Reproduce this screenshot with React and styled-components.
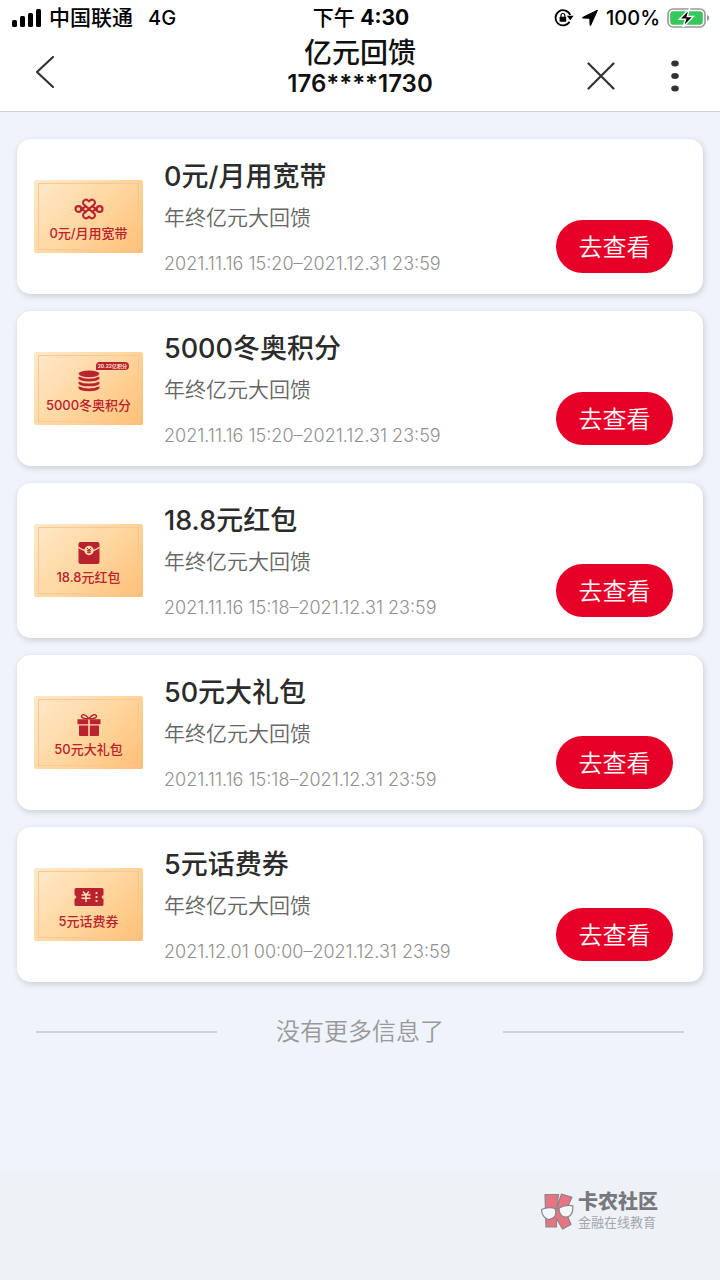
import styled, { createGlobalStyle } from "styled-components";

const GlobalStyle = createGlobalStyle`
    * {
        box-sizing: border-box;
    }
    body {
        margin: 0;
        background: #eff3fb;
        color: #333;
        font-family: Inter, "Noto Sans CJK SC", sans-serif;
    }
`

const Page = styled.div`
    min-height: 100vh;
    display: flex;
    flex-direction: column;
`

const Header = styled.header`
    background: #fff;
    border-bottom: 1px solid #cfd1d6;
`

const StatusBar = styled.div`
    display: grid;
    grid-template-columns: 1fr auto 1fr;
    align-items: center;
    height: 36px;
    padding: 0 10px 0 12px;
    color: #000;
    font-size: 20px;
    font-weight: 500;
    line-height: 36px;
`

const StatusGroup = styled.div`
    display: flex;
    align-items: center;
    justify-content: ${(props) => (props.$end ? "flex-end" : "flex-start")};
    gap: 7px;
`

const Carrier = styled.span`
    font-size: 21px;
    margin-right: 8px;
`

const Clock = styled.span`
    font-size: 21px;
    b {
        font-weight: 700;
    }
`

const NavBar = styled.nav`
    display: grid;
    grid-template-columns: 1fr auto 1fr;
    align-items: center;
    height: 75px;
    padding: 0 28px 12px;
`

const NavGroup = styled.div`
    display: flex;
    justify-content: ${(props) => (props.$end ? "flex-end" : "flex-start")};
    gap: 40px;
    padding-top: ${(props) => (props.$end ? "16px" : "8px")};
`

const IconButton = styled.button`
    display: flex;
    align-items: center;
    justify-content: center;
    width: 34px;
    height: 34px;
    padding: 0;
    border: none;
    background: none;
`

const NavTitle = styled.h1`
    margin: 0;
    color: #111;
    font-size: 28px;
    font-weight: 500;
    line-height: 32px;
    text-align: center;
    span {
        display: block;
        font-size: 24px;
        font-weight: 600;
        line-height: 30px;
    }
`

const CardList = styled.main`
    display: flex;
    flex-direction: column;
    gap: 17px;
    padding: 27px 17px 0;
`

const Card = styled.article`
    display: flex;
    align-items: center;
    gap: 21px;
    height: 155px;
    padding: 0 30px 0 17px;
    border-radius: 14px;
    background: #fff;
    box-shadow: 1px 2px 6px rgba(0, 0, 0, 0.16);
`

const Thumb = styled.div`
    flex: none;
    width: 109px;
    height: 73px;
    padding: 3px 4px;
    border-radius: 2px;
    background: linear-gradient(135deg, #ffe9cb 0%, #ffd7a0 50%, #ffbf74 100%);
`

const ThumbInner = styled.div`
    position: relative;
    display: flex;
    flex-direction: column;
    align-items: center;
    height: 100%;
    padding-top: 14px;
    border: 1px solid #f8c795;
    color: #b9222f;
    font-size: 13px;
    font-weight: 500;
    line-height: 18px;
    white-space: nowrap;
    svg {
        display: block;
        margin-bottom: 4px;
    }
`

const Badge = styled.span`
    position: absolute;
    top: 6px;
    right: 9px;
    padding: 0 2px;
    border-radius: 4px 4px 4px 0;
    background: #b9222f;
    color: #ffe9cb;
    font-size: 5px;
    font-weight: 700;
    line-height: 8px;
`

const Info = styled.div`
    flex: 1;
    align-self: flex-start;
    padding-top: 18px;
`

const Title = styled.h2`
    margin: 0;
    color: #2b2b2b;
    font-size: 27px;
    font-weight: 500;
    line-height: 40px;
`

const Subtitle = styled.p`
    margin: 6px 0 0;
    color: #666;
    font-size: 21px;
    font-weight: 350;
    line-height: 30px;
`

const Period = styled.p`
    margin: 19px 0 0;
    color: #909090;
    font-size: 18px;
    font-weight: 300;
    line-height: 24px;
`

const ViewButton = styled.button`
    flex: none;
    align-self: flex-end;
    width: 117px;
    height: 53px;
    margin-bottom: 21px;
    padding: 0 0 2px;
    border: none;
    border-radius: 27px;
    background: #e60027;
    color: #fff;
    font-family: inherit;
    font-size: 24px;
    font-weight: 350;
`

const EndNote = styled.div`
    display: flex;
    align-items: center;
    gap: 59px;
    padding: 32px 36px 0;
    color: #999;
    font-size: 24px;
    font-weight: 350;
    line-height: 36px;
    &::before,
    &::after {
        content: "";
        flex: 1;
        height: 2px;
        background: #d0d2d8;
    }
`

const Footer = styled.footer`
    display: flex;
    align-items: center;
    justify-content: flex-end;
    gap: 4px;
    margin-top: auto;
    padding: 21px 62px 49px 0;
    background: #eef2f7;
    color: #77797e;
`

const BrandName = styled.div`
    font-size: 20px;
    font-weight: 900;
    line-height: 22px;
    small {
        display: block;
        color: #a4a6ab;
        font-size: 13px;
        font-weight: 400;
        line-height: 18px;
    }
`

const SignalIcon = () => (
    <svg width="30" height="20" viewBox="0 0 30 20" fill="#000">
        <rect x="0" y="12" width="5" height="7" rx="1.5" />
        <rect x="8" y="8" width="5" height="11" rx="1.5" />
        <rect x="16" y="5" width="5" height="14" rx="1.5" />
        <rect x="24" y="1" width="5" height="18" rx="1.5" />
    </svg>
)

const RotationLockIcon = () => (
    <svg width="20" height="18" viewBox="0 0 20 18">
        <path d="M16.2 6A7.6 7.6 0 1 0 15.6 12.8" fill="none" stroke="#000" strokeWidth="1.8" />
        <path d="M12.8 6.8h6.8l-3.3 4.4z" fill="#000" />
        <rect x="5.6" y="7.8" width="6.6" height="5" rx="0.6" fill="#000" />
        <path d="M7 8.3V6.4a1.9 1.9 0 0 1 3.8 0v1.9" fill="none" stroke="#000" strokeWidth="1.2" />
    </svg>
)

const LocationIcon = () => (
    <svg width="18" height="18" viewBox="0 0 18 18">
        <path d="M16.5 1.2 9.7 16.2q-.4.8-.6 0L8.8 9.3 1.9 9q-1-.2 0-.7z" fill="#000" stroke="#000" strokeLinejoin="round" />
    </svg>
)

const BatteryIcon = () => (
    <svg width="43" height="20" viewBox="0 0 43 20">
        <rect x="1" y="1" width="37" height="18" rx="5" fill="none" stroke="#96999c" strokeWidth="1.6" />
        <rect x="3.2" y="3.2" width="32.6" height="13.6" rx="3" fill="#35c759" />
        <path d="M40 7q2.3 1 2.3 3T40 13z" fill="#96999c" />
        <path d="M22.4 1 12.3 11.2h6.3L16 19l10.5-10.5h-6.2z" fill="#000" stroke="#fff" strokeWidth="1.4" />
    </svg>
)

const BackIcon = () => (
    <svg width="20" height="34" viewBox="0 0 20 34" fill="none" stroke="#333" strokeWidth="2.2" strokeLinecap="round" strokeLinejoin="round">
        <path d="M18 2 2 17l16 15" />
    </svg>
)

const CloseIcon = () => (
    <svg width="28" height="28" viewBox="0 0 28 28" stroke="#333" strokeWidth="2.2" strokeLinecap="round">
        <path d="M1.5 1.5l25 25M26.5 1.5l-25 25" />
    </svg>
)

const MoreIcon = () => (
    <svg width="8" height="32" viewBox="0 0 8 32" fill="#333">
        <ellipse cx="4" cy="3.5" rx="3.8" ry="3" />
        <ellipse cx="4" cy="16" rx="3.8" ry="3" />
        <ellipse cx="4" cy="28.5" rx="3.8" ry="3" />
    </svg>
)

const KnotIcon = () => (
    <svg width="30" height="22" viewBox="0 0 30 22" fill="none" stroke="#b9222f" strokeWidth="2.1">
        <path d="M15 11 9.6 6.4A3 3 0 1 1 15 4.2 3 3 0 1 1 20.4 6.4L9.600 15.600A3 3 0 1 0 15 17.800 3 3 0 1 0 20.400 15.600z" />
        <circle cx="4.4" cy="11" r="2.9" />
        <circle cx="25.6" cy="11" r="2.9" />
        <path d="M6.8 9.4l4.6 4.4M6.8 12.6l4.6-4.4M23.2 9.4l-4.6 4.4M23.2 12.6l-4.6-4.4" />
    </svg>
)

const CoinsIcon = () => (
    <svg width="22" height="22" viewBox="0 0 22 22" fill="#b9222f">
        <ellipse cx="11" cy="3.8" rx="10.4" ry="3.4" />
        <path d="M.6 6.5q10.4 4.4 20.8 0v2.3q-2 2.6-10.4 2.6T.6 8.8z" />
        <path d="M.6 11.4q10.4 4.4 20.8 0v2.3q-2 2.6-10.4 2.6T.6 13.7z" />
        <path d="M.6 16.3q10.4 4.4 20.8 0v2.3q-2 2.6-10.4 2.6T.6 18.6z" />
    </svg>
)

const EnvelopeIcon = () => (
    <svg width="22" height="22" viewBox="0 0 22 22">
        <rect x=".5" y="0" width="21" height="22" rx="2" fill="#b9222f" />
        <path d="M.5 5.2q4 3.4 10.5 3.6 6.5-.2 10.5-3.6" fill="none" stroke="#ffdcae" strokeWidth="1.5" />
        <circle cx="11" cy="8.5" r="4.7" fill="#ffdcae" />
        <path d="m9 5.8 2 2.6 2-2.6M11 8.4v3.2M9 8.6h4M9 10.2h4" fill="none" stroke="#b9222f" strokeWidth="1" />
    </svg>
)

const GiftIcon = () => (
    <svg width="24" height="22" viewBox="0 0 24 22">
        <path d="M12 4.7C9 .2 5-.2 4.5 2.2 4.5 4.2 8 4.7 12 4.7 15-.2 19-.2 19.5 2.2 19.5 4.2 16 4.7 12 4.7" fill="none" stroke="#b9222f" strokeWidth="1.4" />
        <path d="M.5 5.2h10.7v5H.5zM12.8 5.2h10.7v5H12.8zM2 11.5h9.2V22H3q-1 0-1-1zM12.8 11.5H22V21q0 1-1 1h-8.2z" fill="#b9222f" />
    </svg>
)

const CouponIcon = () => (
    <svg width="30" height="22" viewBox="0 0 30 22">
        <path d="M2 2h26q1.5 0 1.5 1.5v5.700a1.8 1.8 0 0 0 0 3.6V18.5q0 1.5-1.5 1.5H2Q.5 20 .5 18.5v-5.700a1.8 1.8 0 0 0 0-3.6V3.5Q.5 2 2 2z" fill="#b9222f" />
        <path d="m9 5.5 3 3.5 3-3.5M7.5 9h9M7.5 12.3h9M12 9v7" fill="none" stroke="#ffe0b8" strokeWidth="1.5" />
        <path d="M22.5 6v11" stroke="#ffe0b8" strokeWidth="1.8" strokeDasharray="2 2" />
    </svg>
)

const BrandLogo = () => (
    <svg width="34" height="37" viewBox="0 0 34 37" stroke="#85878b" strokeWidth="1.2" strokeLinejoin="round">
        <path d="M5 1.5h13.5L17 14.5 21.5 1l10.5 3.2L25.5 18 31 31.5 22.5 36l-6-10.5v8.5H6z" fill="#e87481" />
        <path d="M1.5 16.5Q8 13.5 15 15.5q2 5-.8 8.5-3 3.5-7.5 1.8Q2 23.5 1.5 16.5zM19 15q7-3.5 13.8-2.2 .4 7-2.6 9.7-3.5 3-8 .5Q19 20.5 19 15z" fill="#f4f6fa" />
        <path d="M15.3 16.5q2-1.8 3.8-.8" fill="none" strokeWidth="1.6" />
    </svg>
)

const offers = [
    { title: "0元/月用宽带", period: "2021.11.16 15:20–2021.12.31 23:59", icon: <KnotIcon /> },
    { title: "5000冬奥积分", period: "2021.11.16 15:20–2021.12.31 23:59", icon: <CoinsIcon />, badge: "20.22亿积分" },
    { title: "18.8元红包", period: "2021.11.16 15:18–2021.12.31 23:59", icon: <EnvelopeIcon /> },
    { title: "50元大礼包", period: "2021.11.16 15:18–2021.12.31 23:59", icon: <GiftIcon /> },
    { title: "5元话费券", period: "2021.12.01 00:00–2021.12.31 23:59", icon: <CouponIcon /> },
]

const OfferCard = (props) => {
    const { title, period, icon, badge } = props.data;

    return (
        <Card>
            <Thumb>
                <ThumbInner>
                    {icon}
                    {!!badge && <Badge>{badge}</Badge>}
                    <span>{title}</span>
                </ThumbInner>
            </Thumb>
            <Info>
                <Title>{title}</Title>
                <Subtitle>年终亿元大回馈</Subtitle>
                <Period>{period}</Period>
            </Info>
            <ViewButton type="button">去查看</ViewButton>
        </Card>
    )
}

const App = () => {
    return (
        <Page lang="zh-CN">
            <GlobalStyle />
            <Header>
                <StatusBar>
                    <StatusGroup>
                        <SignalIcon />
                        <Carrier>中国联通</Carrier>
                        <span>4G</span>
                    </StatusGroup>
                    <Clock>下午 <b>4:30</b></Clock>
                    <StatusGroup $end>
                        <RotationLockIcon />
                        <LocationIcon />
                        <span>100%</span>
                        <BatteryIcon />
                    </StatusGroup>
                </StatusBar>
                <NavBar>
                    <NavGroup>
                        <IconButton type="button" aria-label="返回"><BackIcon /></IconButton>
                    </NavGroup>
                    <NavTitle>亿元回馈<span>176****1730</span></NavTitle>
                    <NavGroup $end>
                        <IconButton type="button" aria-label="关闭"><CloseIcon /></IconButton>
                        <IconButton type="button" aria-label="更多"><MoreIcon /></IconButton>
                    </NavGroup>
                </NavBar>
            </Header>
            <CardList>
                {offers.map((offer) => <OfferCard key={offer.title} data={offer} />)}
            </CardList>
            <EndNote>没有更多信息了</EndNote>
            <Footer>
                <BrandLogo />
                <BrandName>卡农社区<small>金融在线教育</small></BrandName>
            </Footer>
        </Page>
    )
}

export default App;
